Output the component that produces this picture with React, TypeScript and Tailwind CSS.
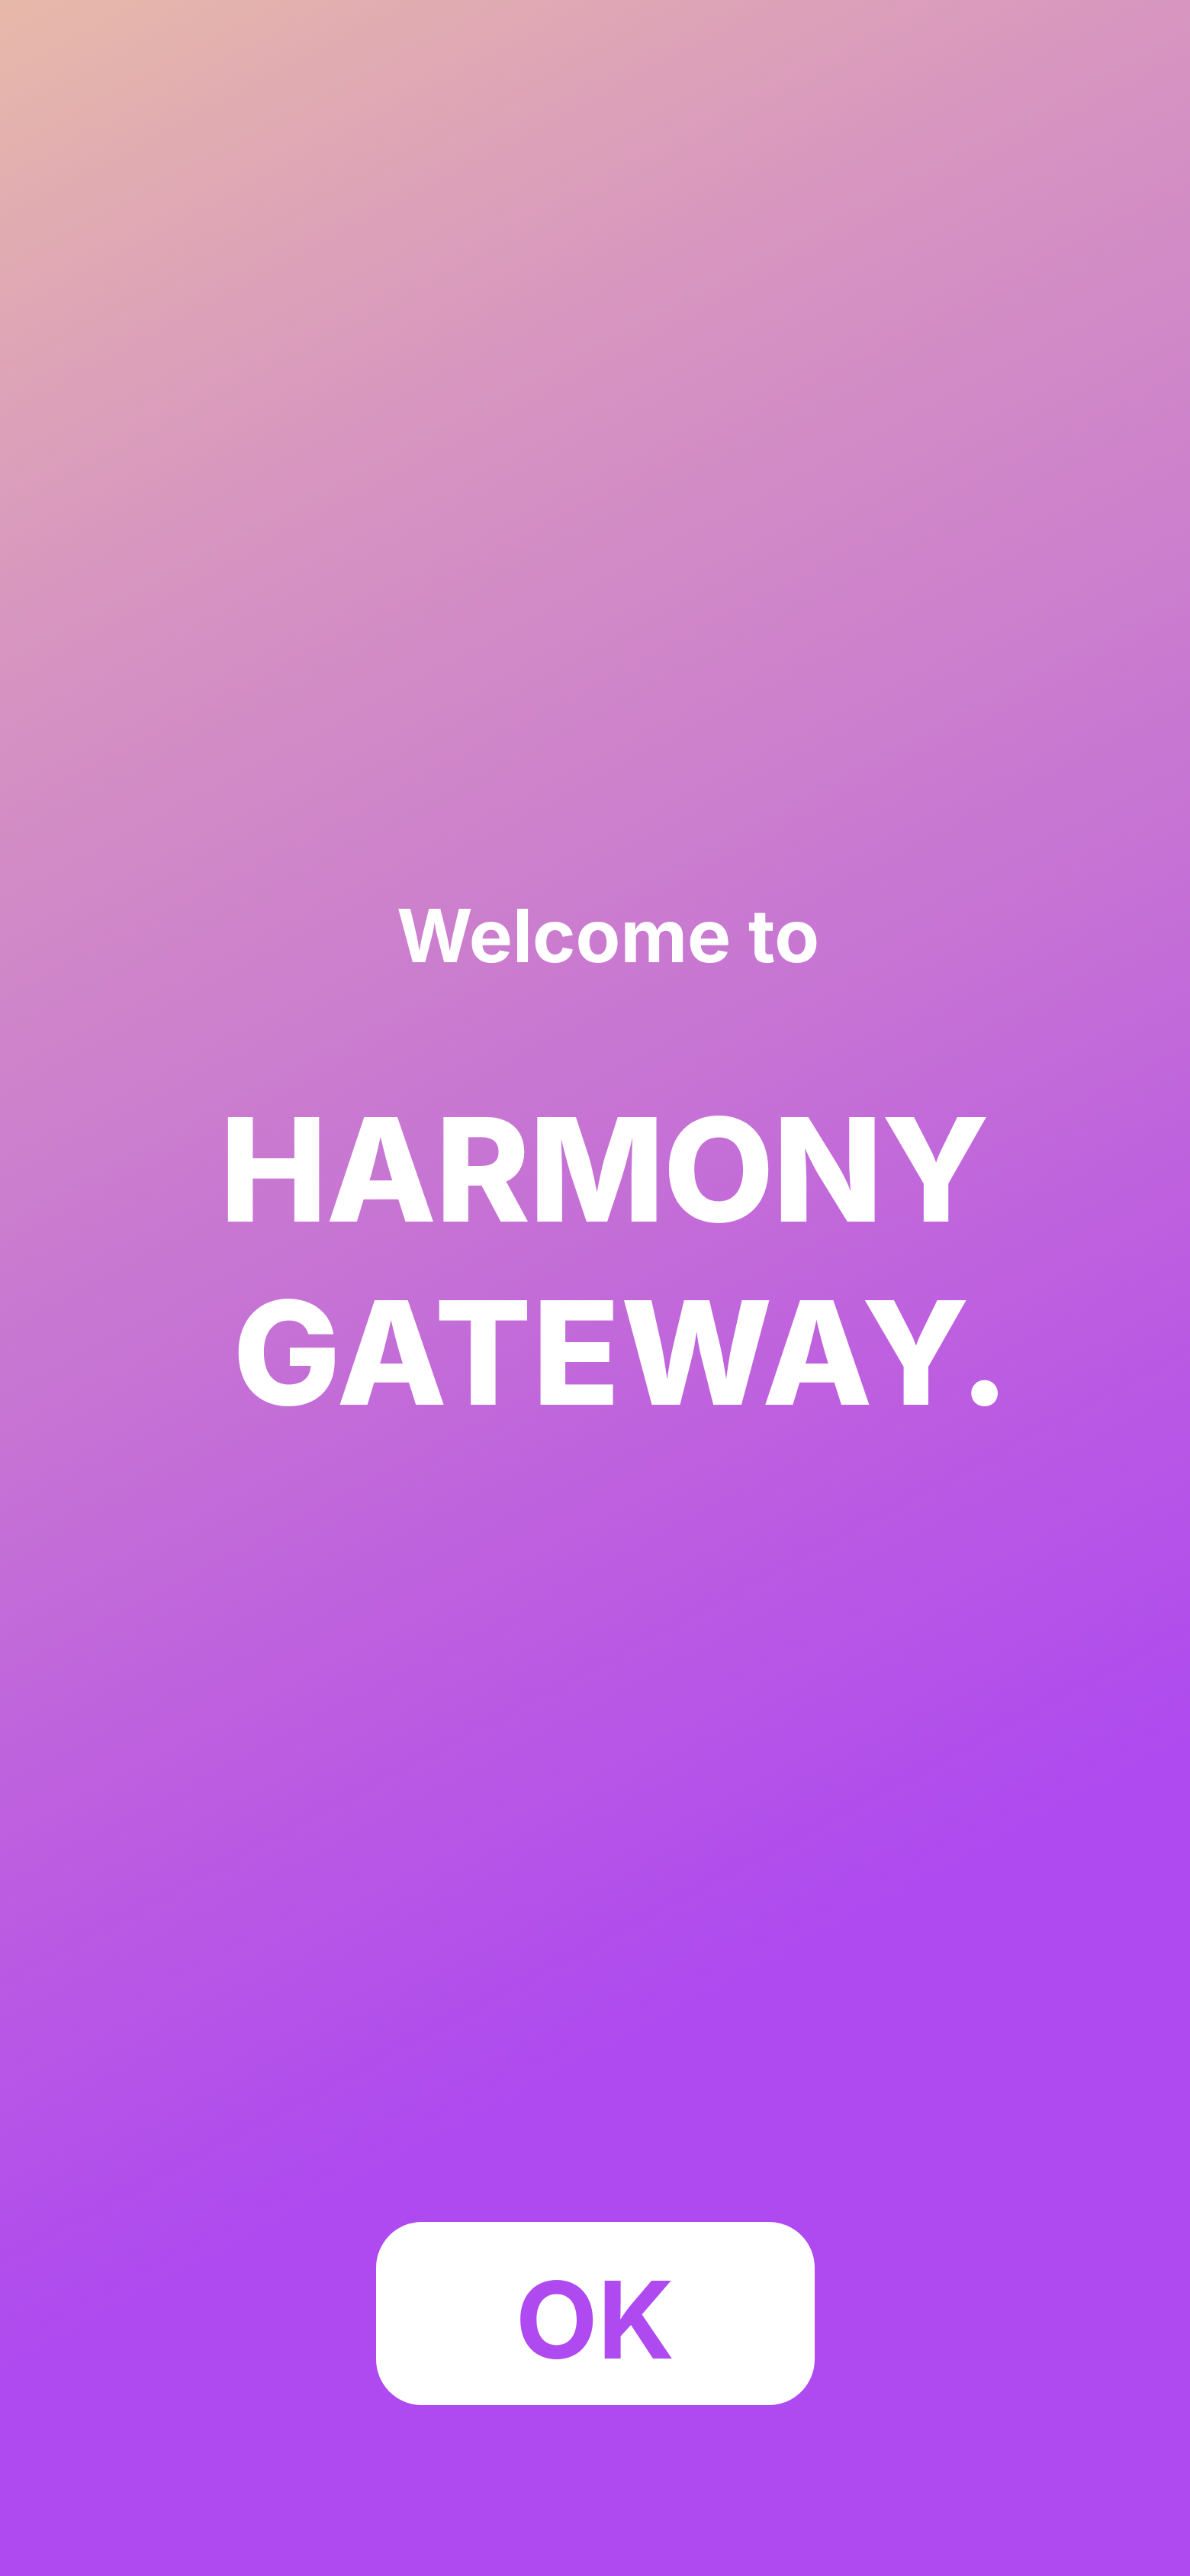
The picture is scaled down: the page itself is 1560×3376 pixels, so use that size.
import React from "react";

export default function App() {
  return (
    <div
      className="flex h-[3376px] w-full flex-col items-center bg-[linear-gradient(152deg,#e7b9a9_0%,#d795c0_20%,#c673d4_45%,#bd5ee0_58%,#ae4aef_74%)] text-white"
      style={{ fontFamily: "Inter, 'Noto Sans', sans-serif" }}
    >
      <p className="mt-[1178px] pl-[34px] text-center text-[96px] font-bold leading-[96px]">
        Welcome to
      </p>
      <h1 className="mt-[139px] flex flex-col items-center text-center text-[188px] font-extrabold leading-[240px]">
        <span className="pl-[24px] tracking-[-1.5px]">HARMONY</span>
        <span className="pl-[70px] tracking-[1px]">GATEWAY.</span>
      </h1>
      <button
        type="button"
        className="mt-auto mb-[224px] flex h-[240px] w-[575px] items-center justify-center rounded-[60px] bg-white pt-[16px] text-[140px] font-bold leading-none text-[#ae4aef]"
      >
        OK
      </button>
    </div>
  );
}
